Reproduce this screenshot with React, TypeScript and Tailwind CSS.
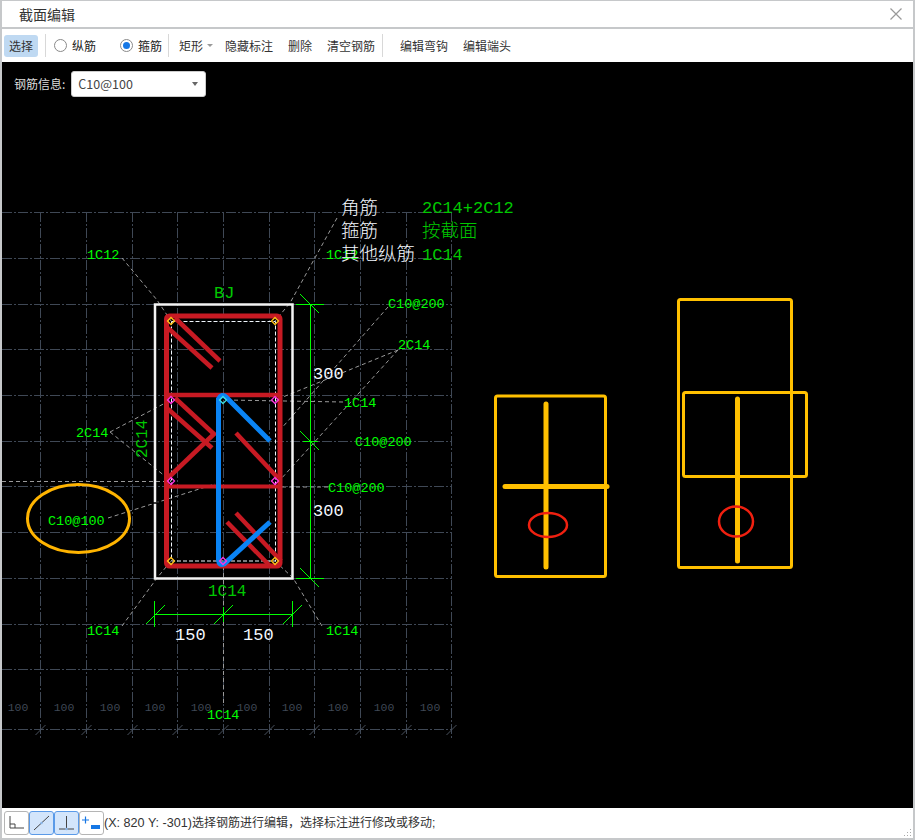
import React from "react";

const GRID_X = [40.5, 86.5, 132.5, 177.5, 223.5, 269.5, 314.5, 360.5, 406.5, 451.5];
const GRID_Y = [212.5, 258.5, 304.5, 349.5, 395.5, 441.5, 486.5, 532.5, 578.5, 624.5, 669.5, 729.5];
const GRID_LABEL_X = [18, 64, 110, 155, 201, 247, 292, 338, 384, 430];

const MONO = "'Liberation Mono', monospace";
const CJK = "'Noto Sans CJK SC', sans-serif";

const LEADERS = [
  "M122 258 L157 300 L171 321",
  "M337 218 L290 303 L275 321",
  "M388 307 L280 430",
  "M398 350 L293 393 L275 400",
  "M398 350 L280 480",
  "M343 402 L226 400",
  "M328 487 L278 487",
  "M110 432 L171 400",
  "M110 432 L171 481",
  "M108 518 L215 484",
  "M122 626 L157 578 L171 561",
  "M322 626 L293 578 L275 561",
  "M223.5 566 L223.5 705",
  "M2 481.5 L171 481.5",
];

const RED_BARS = [
  "M175 318 L220 361",
  "M168 328 L212 368",
  "M175 398 L215 435",
  "M168 409 L212 448",
  "M168 478 L215 433",
  "M236 433 L278 478",
  "M236 513 L281 561",
  "M227 522 L270 566",
];

const Label = ({ x, y, size = 13.5, fill = "#00ff00", children }: { x: number; y: number; size?: number; fill?: string; children: React.ReactNode }) => (
  <text x={x} y={y} fontSize={size} fill={fill} fontFamily={MONO}>
    {children}
  </text>
);

const Marker = ({ x, y, color }: { x: number; y: number; color: string }) => (
  <path d={`M${x} ${y - 3.5} L${x + 3.5} ${y} L${x} ${y + 3.5} L${x - 3.5} ${y} Z`} fill="none" stroke={color} strokeWidth="1.3" />
);

const Drawing = () => (
  <svg viewBox="2 62 911 746" className="block w-full h-full">
    {GRID_Y.map((y) => (
      <line key={y} x1="2" x2="452" y1={y} y2={y} stroke="#3f4855" strokeWidth="1" strokeDasharray="10 2 2 2" />
    ))}
    {GRID_X.map((x) => (
      <line key={x} x1={x} x2={x} y1="212" y2="738" stroke="#3f4855" strokeWidth="1" strokeDasharray="10 2 2 2" />
    ))}
    {GRID_X.map((x) => (
      <line key={x} x1={x - 5} x2={x + 5} y1="735" y2="725" stroke="#4a525e" strokeWidth="1" />
    ))}
    {GRID_LABEL_X.map((x) => (
      <text key={x} x={x} y="711" fontSize="11.5" textAnchor="middle" fill="#3f4855" fontFamily={MONO}>
        100
      </text>
    ))}

    {LEADERS.map((d) => (
      <path key={d} d={d} fill="none" stroke="#9a9a9a" strokeWidth="1" strokeDasharray="4 3" />
    ))}

    <rect x="155" y="304.5" width="137.5" height="274" fill="none" stroke="#f4f4f4" strokeWidth="2.5" />
    <line x1="151" x2="158" y1="503" y2="503" stroke="#000" strokeWidth="1.5" />

    <rect x="171.5" y="321.5" width="104" height="239.5" fill="none" stroke="#f0f6fc" strokeWidth="1" strokeDasharray="4 2" />

    <rect x="166.5" y="316" width="113.5" height="250" rx="3" fill="none" stroke="#c71a23" strokeWidth="5" />
    <line x1="166" x2="280" y1="395" y2="395" stroke="#c71a23" strokeWidth="4.5" />
    <line x1="166" x2="280" y1="486.5" y2="486.5" stroke="#c71a23" strokeWidth="4" />
    {RED_BARS.map((d) => (
      <path key={d} d={d} stroke="#c71a23" strokeWidth="4.5" fill="none" />
    ))}

    <path d="M270 441 L226 397 Q222 393 218.5 399 L218.5 560 Q219 566 224 564 L270 522" fill="none" stroke="#0a84f5" strokeWidth="5" />

    {[[171, 321], [275, 321], [171, 561], [275, 561]].map(([x, y]) => (
      <Marker key={`${x}-${y}`} x={x} y={y} color="#ffc21a" />
    ))}
    {[[171, 400], [275, 400], [171, 481], [275, 481], [223, 561]].map(([x, y]) => (
      <Marker key={`${x}-${y}`} x={x} y={y} color="#ff33e0" />
    ))}
    <Marker x={223} y={400} color="#40e0e0" />

    {/* dimension lines */}
    <g stroke="#00ff00" strokeWidth="1" fill="none">
      <path d="M310.5 304 L310.5 578" />
      <path d="M296 304.5 L324 304.5 M296 578.5 L324 578.5 M300 294 L319 313 M300 568 L319 587 M300 431 L319 450 M303 441.5 L318 441.5" />
      <path d="M154.5 614.5 L292.5 614.5" />
      <path d="M154.5 601 L154.5 627 M292.5 601 L292.5 627 M223.5 607 L223.5 622" />
      <path d="M146 624 L165 605 M214 624 L233 605 M283 624 L302 605" />
    </g>

    <ellipse cx="78.5" cy="518.5" rx="51" ry="34" fill="none" stroke="#ffb400" strokeWidth="3" />

    <Label x={87} y={259}>1C12</Label>
    <Label x={326} y={259}>1C12</Label>
    <Label x={388} y={308}>C10@200</Label>
    <Label x={398} y={349}>2C14</Label>
    <Label x={344} y={407}>1C14</Label>
    <Label x={355} y={446}>C10@200</Label>
    <Label x={328} y={492}>C10@200</Label>
    <Label x={76} y={437}>2C14</Label>
    <Label x={48} y={525}>C10@100</Label>
    <Label x={87} y={635}>1C14</Label>
    <Label x={326} y={635}>1C14</Label>
    <Label x={207} y={719}>1C14</Label>
    <Label x={214} y={298} size={17} fill="#00c800">BJ</Label>
    <Label x={208} y={596} size={16} fill="#00c800">1C14</Label>
    <text x="0" y="0" fontSize="16" fill="#00c800" fontFamily={MONO} transform="translate(147 458) rotate(-90)">
      2C14
    </text>
    <Label x={313} y={379} size={17} fill="#f4f8ff">300</Label>
    <Label x={313} y={516} size={17} fill="#f4f8ff">300</Label>
    <Label x={175} y={640} size={17} fill="#f4f8ff">150</Label>
    <Label x={243} y={640} size={17} fill="#f4f8ff">150</Label>

    <g fontFamily={CJK} fontSize="18.5" fontWeight="300">
      <text x="341" y="214" fill="#f4f8ff">角筋</text>
      <text x="341" y="237" fill="#f4f8ff">箍筋</text>
      <text x="341" y="260" fill="#f4f8ff">其他纵筋</text>
      <text x="422" y="237" fill="#00c800">按截面</text>
    </g>
    <Label x={422} y={213} size={17} fill="#00c800">2C14+2C12</Label>
    <Label x={422} y={260} size={17} fill="#00c800">1C14</Label>

    <g fill="none" stroke="#ffc000" strokeWidth="3">
      <rect x="495.5" y="396" width="110" height="180.5" rx="2" />
      <rect x="678.5" y="299.5" width="113" height="268" rx="2" />
      <rect x="683.5" y="392.5" width="123" height="84" rx="2" />
    </g>
    <g stroke="#ffc000" strokeWidth="5" strokeLinecap="round">
      <line x1="546" x2="546" y1="404" y2="567" />
      <line x1="505" x2="607" y1="486.5" y2="486.5" />
      <line x1="737.5" x2="737.5" y1="399" y2="561" />
    </g>
    <g fill="none" stroke="#f02010" strokeWidth="2.5">
      <ellipse cx="548" cy="525" rx="19" ry="12" />
      <ellipse cx="736" cy="521.5" rx="17" ry="15" />
    </g>
  </svg>
);

const Radio = ({ label, checked }: { label: string; checked?: boolean }) => (
  <div className="flex items-center gap-[5px]">
    <span className="flex items-center justify-center w-[13px] h-[13px] rounded-full border border-[#8a8a8a] bg-white">
      {checked && <span className="w-[7px] h-[7px] rounded-full bg-[#1677e5]" />}
    </span>
    <span className="text-[12px] text-[#222]">{label}</span>
  </div>
);

const Sep = () => <div className="w-px h-[23px] bg-[#d8d8d8]" />;

const StatusButton = ({ active, children }: { active?: boolean; children: React.ReactNode }) => (
  <div className={`w-[25px] h-[24px] rounded-[3px] border flex items-center justify-center ${active ? "border-[#5a9ae8] bg-[#d3e5fb]" : "border-[#b5b5b5] bg-white"}`}>
    <svg width="21" height="20" viewBox="0 0 21 20" fill="none">
      {children}
    </svg>
  </div>
);

export default function App() {
  return (
    <div className="flex flex-col w-[915px] h-[840px] overflow-hidden bg-[#c6c8ca] pt-px pl-[2px] pr-[2px] pb-[2px] font-['Noto_Sans_CJK_SC',sans-serif]">
      <div className="flex items-center justify-between h-[26px] bg-white pl-[17px] pr-[11px] shrink-0">
        <span className="text-[14px] text-[#333]">截面编辑</span>
        <svg width="12" height="12" viewBox="0 0 12 12" fill="none" stroke="#999" strokeWidth="1.2">
          <path d="M0.5 0.5 L11.5 11.5 M11.5 0.5 L0.5 11.5" />
        </svg>
      </div>

      <div className="flex items-center h-[33px] mt-[2px] bg-white pl-[2px] shrink-0">
        <div className="flex items-center justify-center w-[34px] h-[22px] rounded-[3px] bg-[#bfd9f2] text-[12px] text-[#333]">选择</div>
        <div className="ml-[7px]"><Sep /></div>
        <div className="ml-[8px]"><Radio label="纵筋" /></div>
        <div className="ml-[24px]"><Radio label="箍筋" checked /></div>
        <div className="ml-[6px]"><Sep /></div>
        <div className="flex items-center ml-[10px] text-[12px] text-[#333]">
          <span>矩形</span>
          <span className="ml-[4px] w-0 h-0 border-x-[3px] border-x-transparent border-t-[3px] border-t-[#999]" />
        </div>
        <span className="ml-[12px] text-[12px] text-[#333]">隐藏标注</span>
        <span className="ml-[15px] text-[12px] text-[#333]">删除</span>
        <span className="ml-[15px] text-[12px] text-[#333]">清空钢筋</span>
        <div className="ml-[7px]"><Sep /></div>
        <span className="ml-[17px] text-[12px] text-[#333]">编辑弯钩</span>
        <span className="ml-[15px] text-[12px] text-[#333]">编辑端头</span>
      </div>

      <div className="relative flex-1 min-h-0 bg-black">
        <Drawing />
        <div className="absolute left-[12px] top-[9px] flex items-center gap-[6px]">
          <span className="text-[12px] text-[#ddd]">钢筋信息:</span>
          <div className="flex items-center justify-between w-[135px] h-[26px] rounded-[3px] bg-white pl-[6px] pr-[7px] border border-[#ccc]">
            <span className="text-[12.5px] text-[#444]">C10@100</span>
            <span className="w-0 h-0 border-x-[3px] border-x-transparent border-t-[4px] border-t-[#666]" />
          </div>
        </div>
      </div>

      <div className="relative flex items-center h-[30px] bg-white pl-[2px] shrink-0">
        <StatusButton>
          <path d="M4 3 V15 H18 M4 11 H9 V15" stroke="#444" strokeWidth="1" />
        </StatusButton>
        <StatusButton active>
          <path d="M3 17 L18 3" stroke="#444" strokeWidth="1" />
          <circle cx="10.5" cy="10" r="1.2" fill="#8ab6ea" />
        </StatusButton>
        <StatusButton active>
          <path d="M3 16 H18 M10.5 3 V16" stroke="#444" strokeWidth="1" />
          <circle cx="10.5" cy="16" r="1.3" fill="#8ab6ea" />
        </StatusButton>
        <StatusButton>
          <path d="M1 7 H8 M4.5 3.5 V10.5" stroke="#1677e5" strokeWidth="1.2" />
          <rect x="10" y="12" width="9" height="4" fill="#1677e5" />
        </StatusButton>
        <span className="text-[12px] text-[#333] font-['Liberation_Sans','Noto_Sans_CJK_SC',sans-serif] whitespace-nowrap">
          <span className="text-[12.6px]">(X: 820 Y: -301)</span>选择钢筋进行编辑，选择标注进行修改或移动;
        </span>
        <svg className="absolute right-[1px] bottom-[1px]" width="9" height="9" viewBox="0 0 9 9" fill="#aaa">
          <rect x="7" y="1" width="1" height="1" />
          <rect x="4" y="4" width="1" height="1" />
          <rect x="7" y="4" width="1" height="1" />
          <rect x="1" y="7" width="1" height="1" />
          <rect x="4" y="7" width="1" height="1" />
          <rect x="7" y="7" width="1" height="1" />
        </svg>
      </div>
    </div>
  );
}
